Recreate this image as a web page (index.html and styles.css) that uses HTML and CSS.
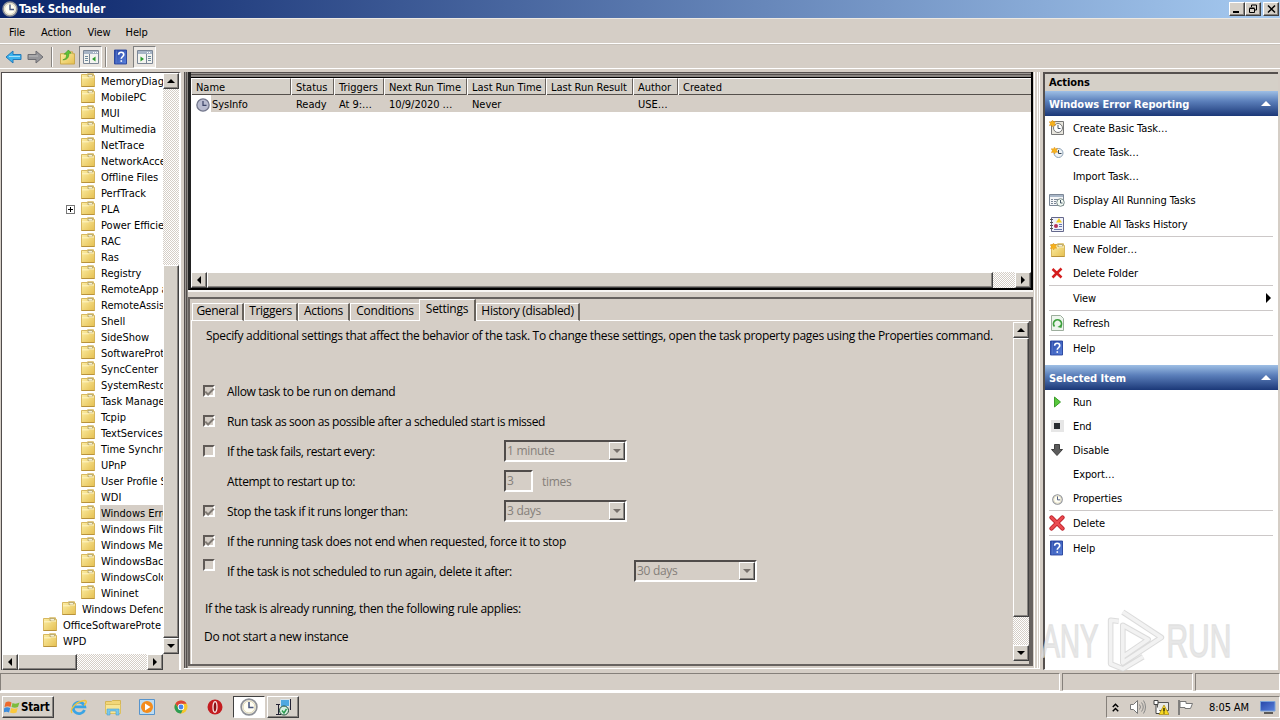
FILE: index.html
```html
<!DOCTYPE html>
<html lang="en">
<head>
<meta charset="utf-8">
<title>Task Scheduler</title>
<link rel="stylesheet" href="styles.css">
</head>
<body>
<svg width="0" height="0" class="defs">
  <defs>
    <linearGradient id="fg" x1="0" y1="0" x2="1" y2="1"><stop offset="0" stop-color="#fdf0a8"/><stop offset="1" stop-color="#e5bf50"/></linearGradient>
    <linearGradient id="blue" x1="0" y1="0" x2="1" y2="1"><stop offset="0" stop-color="#2747a8"/><stop offset="1" stop-color="#5b82dc"/></linearGradient>
    <symbol id="folder" viewBox="0 0 14 14"><path d="M.5 1.500H6.500V.8h6V2.500h1v11H.5z" fill="url(#fg)" stroke="#d3b052" stroke-width=".9"/><path d="M7 1.500h4.500v2.200H7z" fill="#f4f0d8" stroke="#a8965c" stroke-width=".7"/><path d="M1 4.800h6.500l1-.8H13" stroke="#fff6c8" fill="none"/><path d="M.5 13.500h13" stroke="#b8923c"/></symbol>
    <symbol id="clock" viewBox="0 0 16 16"><circle cx="8" cy="8" r="7" fill="#f2f0e8" stroke="#8d9096" stroke-width="1.500"/><circle cx="8" cy="8" r="5.300" fill="#fffef4" stroke="#d8cfa8" stroke-width=".7"/><path d="M8 3.500V8.500H12" fill="none" stroke="#4c5a80" stroke-width="1.400"/></symbol>
    <symbol id="help" viewBox="0 0 14 16"><path d="M.5.500h13v15H.5z" fill="url(#blue)" stroke="#24409a"/><path d="M2.500 1v14" stroke="#5674c6"/><path d="M5 5.500C5 2 10.500 2 10.500 5.500C10.500 7.500 7.800 7.500 7.800 10" fill="none" stroke="#fff" stroke-width="1.700"/><path d="M7 11.500h1.700v1.700H7z" fill="#fff"/></symbol>
    <symbol id="star" viewBox="0 0 8 8"><path d="M4 0l1 2 2.500-.5L6.300 4 8 6 5.500 6 4 8 3 6 .3 6.500 1.500 4 0 2 3 2z" fill="#f6b21c" stroke="#d8891a" stroke-width=".4"/></symbol>
    <symbol id="console" viewBox="0 0 16 14"><path d="M.5.500h15v13H.5z" fill="#f4f4f0" stroke="#7c8796"/><path d="M1 1h14v3H1z" fill="#a8b5c6"/><path d="M10 2.500h1M12 2.500h1M14 2.500h1" stroke="#fff"/><path d="M2 6.500h3M2 8.500h3M2 10.500h3" stroke="#6e8a9c"/><path d="M6.500 4v10" stroke="#7c8796"/></symbol>
  </defs>
</svg>

<div class="desktop">
  <header class="titlebar">
    <svg class="i16"><use href="#clock"/></svg>
    <h1>Task Scheduler</h1>
    <div class="winbtns">
      <span class="btn"><svg viewBox="0 0 14 12"><path d="M3 9h6" stroke="#000" stroke-width="2"/></svg></span>
      <span class="btn"><svg viewBox="0 0 14 12"><path d="M5.500 2h5M10.500 2v5H9M5.500 2v2M3.500 5.500h5v4h-5zM3.500 5h5" fill="none" stroke="#000"/></svg></span>
      <span class="btn close"><svg viewBox="0 0 14 12"><path d="M4 2.500l7 7M11 2.500l-7 7" stroke="#000" stroke-width="1.500"/></svg></span>
    </div>
  </header>
  <nav class="menubar"><span>File</span><span>Action</span><span>View</span><span>Help</span></nav>
  <div class="toolbar">
    <svg class="t-arrow" viewBox="0 0 17 14"><path d="M1 7l7-6v3.500h8v5H8V13z" fill="#3cb4ee" stroke="#2579b8"/><path d="M4 6.500h11" stroke="#a4e0fa"/></svg>
    <svg class="t-arrow fwd" viewBox="0 0 17 14"><path d="M16 7L9 1v3.500H1v5h8V13z" fill="#96969a" stroke="#6d6d72"/><path d="M2 6h9" stroke="#bbb"/></svg>
    <i class="tsep"></i>
    <svg class="t-up" viewBox="0 0 16 16"><path d="M.5 4.500h7l1-2h5v2h2v11H.5z" fill="url(#fg)" stroke="#c9a548"/><path d="M3 11c4-1 4-4 4-6H4.500L9 .5 12 4h-2.500c0 5-2 7-6.500 7z" fill="#5fc238" stroke="#36921c" stroke-width=".6"/></svg>
    <span class="tpress"><svg width="16" height="14"><use href="#console"/><path d="M12.500 6.500v5L9 9z" fill="#2d9c2d"/></svg></span>
    <i class="tsep second"></i>
    <svg class="t-help"><use href="#help"/></svg>
    <span class="tpress last"><svg width="16" height="14" viewBox="0 0 16 14"><path d="M.5.500h15v13H.5z" fill="#f4f4f0" stroke="#7c8796"/><path d="M1 1h14v3H1z" fill="#a8b5c6"/><path d="M10 2.500h1M12 2.500h1" stroke="#fff"/><path d="M11 6.500h3M11 8.500h3M11 10.500h3" stroke="#6e8a9c"/><path d="M9.500 4v10" stroke="#7c8796"/><path d="M3.500 6.500v5L7 9z" fill="#2d9c2d"/></svg></span>
  </div>

  <main class="main">
    <section class="tree">
      <div class="tree-body">
        <ul class="nodes" id="nodes"></ul>
        <div class="hs tree-hs"><span class="btn sb left"></span><span class="btn thumb"></span><i class="track"></i><span class="btn sb right"></span></div>
      </div>
      <div class="vs tree-vs"><span class="btn sb up"></span><i class="track"></i><span class="btn thumb"></span><span class="btn sb down"></span><i class="corner"></i></div>
    </section>

    <section class="center">
      <div class="list">
        <div class="row head"><span>Name</span><span>Status</span><span>Triggers</span><span>Next Run Time</span><span>Last Run Time</span><span>Last Run Result</span><span>Author</span><span>Created</span></div>
        <div class="row task"><span class="first"><svg class="dimclock" viewBox="0 0 16 16"><circle cx="8" cy="8" r="7" fill="#b9bcd0" stroke="#73778c" stroke-width="1.500"/><path d="M8 3.500V8.500H12" fill="none" stroke="#3c4468" stroke-width="1.400"/></svg><b>SysInfo</b></span><span>Ready</span><span>At 9:…</span><span>10/9/2020 …</span><span>Never</span><span></span><span>USE…</span><span></span></div>
        <div class="blank"></div>
        <div class="hs list-hs"><span class="btn sb left"></span><span class="btn thumb"></span><i class="track"></i><span class="btn sb right"></span></div>
      </div>
      <div class="split"></div>
      <div class="detail">
        <div class="tabs"><span>General</span><span>Triggers</span><span>Actions</span><span>Conditions</span><span class="on">Settings</span><span>History (disabled)</span></div>
        <div class="page">
          <div class="form">
            <p class="intro">Specify additional settings that affect the behavior of the task. To change these settings, open the task property pages using the Properties command.</p>
            <div class="opt"><i class="cb on"></i><label>Allow task to be run on demand</label></div>
            <div class="opt"><i class="cb on"></i><label class="tight">Run task as soon as possible after a scheduled start is missed</label></div>
            <div class="opt"><i class="cb"></i><label class="lab tight">If the task fails, restart every:</label><span class="combo">1 minute<span class="btn drop"></span></span></div>
            <div class="opt"><i class="cb none"></i><label class="lab">Attempt to restart up to:</label><span class="num">3</span><span class="dim">times</span></div>
            <div class="opt"><i class="cb on"></i><label class="lab">Stop the task if it runs longer than:</label><span class="combo">3 days<span class="btn drop"></span></span></div>
            <div class="opt"><i class="cb on"></i><label>If the running task does not end when requested, force it to stop</label></div>
            <div class="opt"><i class="cb high"></i><label class="lab wide">If the task is not scheduled to run again, delete it after:</label><span class="combo">30 days<span class="btn drop"></span></span></div>
            <p class="rule">If the task is already running, then the following rule applies:</p>
            <p class="rule2">Do not start a new instance</p>
          </div>
          <div class="vs page-vs"><span class="btn sb up"></span><span class="btn thumb"></span><i class="track"></i><span class="btn sb down"></span></div>
        </div>
      </div>
    </section>

    <aside class="actions">
      <h2>Actions</h2>
      <h3><span>Windows Error Reporting</span><i></i></h3>
      <ul>
        <li><svg viewBox="0 0 16 16"><path d="M2.500 1.500h12v13h-12z" fill="#e8e6de" stroke="#777"/><circle cx="9" cy="8" r="4.500" fill="#fff" stroke="#777"/><path d="M9 5v3.500h2.500" fill="none" stroke="#456"/><use href="#star" width="7" height="7"/></svg>Create Basic Task…</li>
        <li><svg viewBox="0 0 16 16"><circle cx="9.500" cy="9" r="4.500" fill="#eef2f6" stroke="#8aa0b4"/><path d="M9.500 6v3.500h3" fill="none" stroke="#345"/><use href="#star" x="2" y="3" width="7" height="7"/></svg>Create Task…</li>
        <li><svg></svg>Import Task…</li>
        <li><svg viewBox="0 0 16 16"><path d="M.5 2.500h14v11H.5z" fill="#f5f6f8" stroke="#7c8796"/><path d="M1 3h13v2H1z" fill="#a9b7c8"/><path d="M2 7.500h2M5 7.500h4M2 9.500h2M5 9.500h2M2 11.500h2M5 11.500h2" stroke="#7c8796"/><circle cx="11.500" cy="10.500" r="3.800" fill="#f4fbf4" stroke="#788"/><path d="M11.500 8v3h2" fill="none" stroke="#456"/></svg>Display All Running Tasks</li>
        <li><svg viewBox="0 0 16 16"><path d="M2.500 1.500h12v14h-12z" fill="#f0f1f8" stroke="#64688c"/><path d="M1 3.500h3M1 6.500h3M1 9.500h3M1 12.500h3" stroke="#555"/><path d="M10 2l3 4.500H7z" fill="#f2cd21"/><circle cx="7" cy="10" r="2" fill="#b4325a"/><path d="M10 8.500h3M10 10.500h3M5 13.500h8" stroke="#6878b0"/></svg>Enable All Tasks History</li>
        <li class="sep"><svg viewBox="0 0 16 16"><use href="#folder" x="2" y="2" width="14" height="14"/><use href="#star" x="1" y="2" width="7" height="7"/></svg>New Folder…</li>
        <li><svg viewBox="0 0 16 16"><path d="M3.500 4l9 8.500M12.500 3.500l-9 9" stroke="#d41e1e" stroke-width="2.500"/></svg>Delete Folder</li>
        <li class="sep"><svg></svg>View<i class="more"></i></li>
        <li class="sep"><svg viewBox="0 0 16 16"><path d="M2.500.500h9l3 3v12h-12z" fill="#edf5ed" stroke="#9cad9c"/><path d="M5.500 11.500a4 4 0 1 1 6 0" fill="none" stroke="#3ca03c" stroke-width="1.800"/><path d="M13 9l-.5 4-4-1z" fill="#3ca03c"/></svg>Refresh</li>
        <li class="sep"><svg viewBox="0 0 16 16"><use href="#help" x="1" width="13" height="16"/></svg>Help</li>
      </ul>
      <h3 class="h3b"><span>Selected Item</span><i></i></h3>
      <ul>
        <li><svg viewBox="0 0 16 16"><path d="M5.500 3l6 5-6 5z" fill="#58c83c" stroke="#3c9c2c"/></svg>Run</li>
        <li><svg viewBox="0 0 16 16"><path d="M2 2h13v12H2z" fill="#e6e6e6"/><path d="M5 5h6v6H5z" fill="#282c30"/></svg>End</li>
        <li><svg viewBox="0 0 16 16"><path d="M5.500 2.500h5v5h3L8 13.500 2.500 7.500h3z" fill="#5c5c5c" stroke="#404040"/></svg>Disable</li>
        <li><svg></svg>Export…</li>
        <li><svg viewBox="0 0 16 16"><use href="#clock" x="3" y="4" width="11" height="11"/></svg>Properties</li>
        <li class="sep"><svg viewBox="0 0 16 16"><path d="M2.500 2.500l11 11M13.500 2.500l-11 11" stroke="#b81822" stroke-width="4.200" stroke-linecap="round"/><path d="M2.500 2.500l11 11M13.500 2.500l-11 11" stroke="#ea4b50" stroke-width="2.600" stroke-linecap="round"/></svg>Delete</li>
        <li class="sep"><svg viewBox="0 0 16 16"><use href="#help" x="1" width="13" height="16"/></svg>Help</li>
      </ul>
    </aside>
  </main>

  <div class="status"><span></span><span></span><span></span></div>

  <footer class="taskbar">
    <span class="btn start"><svg viewBox="0 0 16 15"><path d="M1.500 2.500Q4.500.5 7.500 2.500L6.500 7Q4 5.500.5 7z" fill="#ee6a2c"/><path d="M8.500 3Q12 4.500 15.500 2.500L14 7Q11 8.500 7.500 7z" fill="#7cbc3c"/><path d="M.3 8Q3 6.500 6.200 8L5 12.500Q2.500 11-.5 12.500z" fill="#3c8cdc"/><path d="M7.200 8Q10.500 9.500 13.700 8L12.500 12.500Q9.500 14 6 12.500z" fill="#fac83c"/></svg>Start</span>
    <svg class="q" viewBox="0 0 18 18"><path d="M14.500 12A5.800 5.800 0 1 1 14.800 8.800H4" fill="none" stroke="#3aa4e4" stroke-width="2.800"/><path d="M2 15C-1 11 7 3 15 2.500c3 .5 0 4-1 5" fill="none" stroke="#f0c43c" stroke-width="1.400"/></svg>
    <svg class="q" viewBox="0 0 18 18"><path d="M1.500 3.500h6l1-1h8v5h-15z" fill="#f2d677" stroke="#d4b554"/><path d="M1.500 6.500h15v9h-15z" fill="#f8e594" stroke="#dcc060"/><path d="M3 17v-6h12v6h-3v-4H6v4z" fill="#78c8ec" stroke="#4ca0d0" stroke-width=".6"/></svg>
    <svg class="q" viewBox="0 0 18 18"><path d="M1.500 1.500h15v15h-15z" fill="#bddcf2" stroke="#5794cc"/><circle cx="9" cy="9" r="6" fill="#f48c1c"/><path d="M7 5.500L12.500 9 7 12.500z" fill="#fff"/></svg>
    <svg class="q" viewBox="0 0 18 18"><circle cx="9" cy="9" r="6.500" fill="#f6c62c"/><path d="M3.400 5.700A6.500 6.500 0 0 1 14.600 5.700H9L6 9z" fill="#dc4438"/><path d="M3.400 5.700A6.500 6.500 0 0 0 9 15.500L11 11H7z" fill="#2c9c54"/><circle cx="9" cy="9" r="3.200" fill="#fff"/><circle cx="9" cy="9" r="2.400" fill="#4884ec"/></svg>
    <svg class="q" viewBox="0 0 18 18"><circle cx="9" cy="9" r="7.500" fill="#c41c20"/><ellipse cx="9" cy="9" rx="2" ry="5.300" fill="#8c1014" stroke="#f8e4e4" stroke-width="1.300"/></svg>
    <span class="app"><svg class="i18" viewBox="0 0 16 16"><use href="#clock"/></svg></span>
    <span class="btn app2"><svg viewBox="0 0 18 18" class="i18"><path d="M6.500 1.500h9v7h-9z" fill="#50a8e0" stroke="#d8e4ec"/><path d="M16.500 1v11M2 6.500h4M4.500 6v10M2 16.500h5" stroke="#223" fill="none"/><circle cx="10" cy="12.500" r="4.500" fill="#d8f0e0" stroke="#1c4c38"/><path d="M8 12.500l2 2.500 2.500-4" stroke="#2c9c50" fill="none" stroke-width="1.500"/></svg></span>
    <div class="tray">
      <svg class="chev" viewBox="0 0 8 10"><path d="M1.500 4.500L4 2l2.500 2.500M1.500 8.500L4 6l2.500 2.500" fill="none" stroke="#000" stroke-width="1.300"/></svg>
      <svg class="spk" viewBox="0 0 17 16"><path d="M1.500 5.500h3l4-4v13l-4-4h-3z" fill="#fff" stroke="#777"/><path d="M10.500 5.500q2 2.500 0 5M12.500 3.500q3.500 4.500 0 9M14.500 1.500q4 6.500 0 13" fill="none" stroke="#888"/></svg>
      <svg class="net" viewBox="0 0 16 16"><path d="M4.500 3.500h11v8h-11z" fill="#e8e8e4" stroke="#555"/><path d="M1 1.500h4v4H1zM3 6v8.500h5" fill="#fff" stroke="#444"/><path d="M11 6l5 9.500H6z" fill="#f8d820" stroke="#a88810" stroke-width=".7"/><path d="M11 9v3.500M11 13.500v1" stroke="#000" stroke-width="1.200"/></svg>
      <svg class="flag" viewBox="0 0 17 16"><path d="M2 1v15" stroke="#666" stroke-width="1.500"/><path d="M3 2.500h6v2h6.500l-2 5H8v-1H3z" fill="#fff" stroke="#777"/></svg>
      <span>8:05 AM</span>
      <svg class="mon" viewBox="0 0 16 14"><path d="M.5 1.500h14.500v9.500H.5z" fill="url(#blue)" stroke="#7ca4d8"/><path d="M4 13h9" stroke="#333" stroke-width="1.500"/></svg>
    </div>
  </footer>

  <svg class="mark" viewBox="0 0 196 66">
    <g fill="#e2e2e2" stroke="#dcdcdc" stroke-width="1.400">
      <text x="5" y="49" textLength="56" lengthAdjust="spacingAndGlyphs">ANY</text>
      <text x="128" y="49" textLength="64" lengthAdjust="spacingAndGlyphs">RUN</text>
    </g>
    <g fill="none" stroke-linejoin="round"><path d="M85 5l38 25-38 25V18l25 14-25 17M81 14l-8-1v43l12 5 20-12" stroke="#d4d4d4" stroke-width="5.500"/><path d="M85 5l38 25-38 25V18l25 14-25 17M81 14l-8-1v43l12 5 20-12" stroke="#f0f0f0" stroke-width="3.500"/></g>
  </svg>
</div>
<script src="tree.js"></script>
</body>
</html>
```
FILE: styles.css
```css
*, *::before, *::after { box-sizing: border-box; }
body { margin: 0; overflow: hidden; background: #d5cec6; font: 11px "DejaVu Sans Condensed", "DejaVu Sans", sans-serif; font-stretch: condensed; color: #000; }
h1, h2, h3, p, ul { margin: 0; padding: 0; font-size: inherit; }
ul { list-style: none; }
svg { display: block; flex: none; }
.defs { position: absolute; }
.i16 { width: 16px; height: 16px; }
.i18 { width: 18px; height: 18px; }
.desktop { position: relative; width: 1280px; height: 720px; display: flex; flex-direction: column; overflow: hidden; letter-spacing: -.1px; }
.btn { display: block; flex: none; background: #d5d0c8; border: 1px solid; border-color: #fff #404040 #404040 #fff; box-shadow: inset -1px -1px #888480; }

.titlebar { height: 18px; flex: none; display: flex; align-items: center; padding-left: 2px; background: linear-gradient(90deg, #0a246a, #a6caf0); }
.titlebar h1 { color: #fff; margin-left: 1px; font-size: 11.500px; letter-spacing: -.1px; }
.winbtns { margin-left: auto; display: flex; padding-right: 1px; }
.winbtns .btn { width: 16px; height: 14px; }
.winbtns .close { margin-left: 2px; }
.winbtns svg { width: 14px; height: 12px; }
.menubar { height: 26px; flex: none; display: flex; align-items: center; padding: 2px 0 0 9px; border-top: 1px solid #ece8e2; border-bottom: 1px solid #fff; }
.menubar span:nth-child(2) { margin-left: 16px; }
.menubar span:nth-child(3) { margin-left: 16px; }
.menubar span:nth-child(4) { margin-left: 15px; }
.toolbar { height: 25px; flex: none; display: flex; align-items: center; padding-left: 5px; border-top: 1px solid #c8c2ba; border-bottom: 1px solid #fff; }
.t-arrow { width: 17px; height: 14px; }
.fwd { margin-left: 5px; }
.tsep { width: 2px; height: 20px; border-left: 1px solid #888480; border-right: 1px solid #fff; margin: 0 7px; }
.t-up { width: 15px; height: 16px; }
.tpress { width: 23px; height: 22px; margin-left: 4px; display: flex; align-items: center; justify-content: center; background: #ebe7e2; border: 1px solid; border-color: #808080 #fff #fff #808080; }
.second { margin: 0 7px 0 3px; }
.t-help { width: 13px; height: 16px; }
.last { margin-left: 6px; }

.main { height: 603px; flex: none; display: flex; padding: 3px 2px 0 1px; }
.tree { width: 180px; height: 598px; display: flex; border: 1px solid #504c4c; border-right: 2px solid #fff; border-bottom: 0; background: #fff; letter-spacing: 0; }
.tree-body { width: 161px; display: flex; flex-direction: column; }
.nodes { height: 581px; overflow: hidden; }
.nodes li { height: 16px; width: 161px; display: flex; align-items: center; padding-left: 79px; overflow: hidden; white-space: nowrap; }
.nodes li svg { width: 14px; height: 14px; margin-top: -2px; }
.nodes li span { margin-left: 5px; padding-left: 1px; height: 16px; line-height: 17px; flex: 1 0 auto; }
.nodes li.sel span { background: #d5cec6; }
.nodes li.l1 { padding-left: 60px; }
.nodes li.l0 { padding-left: 41px; }
.nodes li.plus { padding-left: 64px; }
.nodes li.plus::before { content: ""; flex: none; width: 9px; height: 9px; margin-right: 6px; border: 1px solid #777; background: linear-gradient(#000, #000) center / 5px 1px no-repeat, linear-gradient(#000, #000) center / 1px 5px no-repeat; }
.track { flex: 1; background: repeating-conic-gradient(#fff 0 25%, #d5cec6 0 50%) 0 0 / 2px 2px; }
.hs { display: flex; height: 16px; flex: none; }
.vs { display: flex; flex-direction: column; width: 16px; flex: none; }
.sb { width: 16px; height: 16px; display: flex; align-items: center; justify-content: center; }
.sb::after, .drop::after { content: ""; border: 4px solid transparent; }
.up::after { border-width: 0 4px 4px; border-bottom-color: #000; }
.down::after, .drop::after { border-width: 4px 4px 0; border-top-color: #000; }
.left::after { border-width: 4px 4px 4px 0; border-right-color: #000; }
.right::after { border-width: 4px 0 4px 4px; border-left-color: #000; }
.tree-hs .thumb { width: 59px; }
.tree-vs .thumb { height: 373px; }
.corner { height: 16px; background: #d5cec6; }

.center { width: 856px; margin-left: 3px; height: 597px; display: flex; flex-direction: column; padding: 0 7px 2px 4px; background: linear-gradient(90deg, #55504e 1px, #9a9692 1px 2px, #55504e 2px 3px, #8a8682 3px 4px, transparent 4px 850px, #fff 850px 851px, #d5cec6 851px 853px, #fff 853px 854px, #d5cec6 854px 855px, #fff 855px); border-bottom: 1px solid #fff; }
.list { height: 218px; flex: none; display: flex; flex-direction: column; border: solid #000; border-width: 0 2px 2px 3px; border-left-color: #222; background: #fff; overflow: hidden; }
.list::before { content: ""; height: 6px; flex: none; margin-left: -3px; margin-right: -2px; background: linear-gradient(#55504e 1px, #9a9692 1px 2px, #55504e 2px 3px, #8a8682 3px 5px, #000 5px); }
.row { display: grid; grid-template-columns: 100px 43px 50px 83px 79px 87px 45px 1fr; flex: none; white-space: nowrap; letter-spacing: -.03px; }
.head { height: 17px; background: #d5d0c8; border-bottom: 1px solid #55504c; }
.head span { padding-left: 4px; line-height: 17px; border-top: 1px solid #fff; border-left: 1px solid #fff; border-right: 1px solid #67615c; }
.head span:last-child { border-right: 0; }
.task { height: 17px; line-height: 19px; background: linear-gradient(90deg, #fff 20px, #d5cec6 20px); }
.task span { padding-left: 5px; }
.task .first { display: flex; align-items: center; }
.task b { font-weight: normal; margin-left: 2px; }
.dimclock { width: 14px; height: 14px; }
.blank { flex: 1; }
.list-hs .thumb { width: 786px; }
.split { height: 7px; flex: none; background: #d5cec6; border-top: 2px solid #f8f6f4; }
.detail { flex: 1; display: flex; flex-direction: column; border: 2px solid #67625f; padding: 0 0 0 1px; min-height: 0; }
.tabs { height: 22px; flex: none; display: flex; align-items: flex-end; padding-left: 1px; font: 12px "Open Sans", "Noto Sans", sans-serif; letter-spacing: -.28px; box-shadow: inset 0 -1px #fff; }
.tabs span { height: 18px; line-height: 14px; text-align: center; border: solid #fff; border-width: 1px; border-right: 2px solid #67625c; white-space: nowrap; }
.tabs span:nth-child(1) { width: 52px; }
.tabs span:nth-child(2) { width: 54px; }
.tabs span:nth-child(3) { width: 52px; }
.tabs span:nth-child(4) { width: 69px; border-right-width: 0; }
.tabs span:nth-child(5) { width: 57px; }
.tabs span:nth-child(6) { width: 104px; }
.tabs .on { height: 22px; line-height: 18px; background: #d5cec6; border-bottom: 0; }
.page { flex: 1; display: flex; border-left: 1px solid #fff; border-right: 2px solid #67625f; min-height: 0; padding: 1px 0 3px; }
.form { width: 821px; flex: none; padding-left: 11px; font: 12px "Open Sans", "Noto Sans", sans-serif; letter-spacing: -.33px; white-space: nowrap; }
.tight { letter-spacing: -.4px; }
.intro { line-height: 16px; height: 54px; padding: 6px 0 0 3px; letter-spacing: -.32px; }
.opt { height: 30px; display: flex; align-items: center; }
.cb { width: 12px; height: 12px; border: 2px solid; border-color: #605a56 #fff #fff #605a56; margin: -1px 12px 0 0; display: flex; flex: none; }
.cb.on::after { content: ""; flex: none; width: 9px; height: 5px; border: solid #807a74; border-width: 0 0 2px 2px; transform: rotate(-45deg) translate(-1px, 1px); }
.cb.none { visibility: hidden; }
.cb.high { align-self: flex-start; margin-top: 3px; }
.lab { width: 277px; }
.lab.wide { width: 407px; }
.combo, .num { height: 22px; line-height: 17px; color: #85807a; border: 2px solid; border-color: #504c4a #fff #fff #504c4a; padding-left: 1px; letter-spacing: -.3px; }
.combo { width: 123px; display: flex; justify-content: space-between; box-shadow: inset -1px 0 #504c4a; }
.drop { width: 16px; height: 18px; display: flex; align-items: center; justify-content: center; }
.drop::after { border-top-color: #77716c; }
.num { width: 29px; }
.dim { margin-left: 9px; color: #85807a; letter-spacing: -.3px; }
.rule { margin-top: 15px; line-height: 16px; padding-left: 2px; }
.rule2 { margin-top: 12px; line-height: 16px; padding-left: 1px; }
.page-vs .thumb { height: 279px; }

.actions { width: 235px; height: 598px; margin-left: 3px; background: #fff; border-left: 2px solid #55504e; border-top: 2px solid #55504e; border-bottom: 1px solid #fff; }
.actions h2 { height: 17px; line-height: 17px; padding-left: 4px; background: #d5d0c8; font-size: 11px; }
.actions h3 { height: 25px; padding: 0 7px 0 4px; display: flex; align-items: center; justify-content: space-between; color: #fff; background: linear-gradient(#9ebfe5, #5c80bb 40%, #1b3878); }
.actions h3 span { padding-top: 1px; letter-spacing: -.02px; }
.actions h3 i { border: 5px solid transparent; border-width: 0 5px 5px; border-bottom-color: #fff; }
.h3b { margin-top: 5px; }
.actions li { height: 24px; display: flex; align-items: center; padding-left: 4px; white-space: nowrap; }
.actions li svg { width: 16px; height: 16px; margin-right: 8px; }
.actions li.sep { height: 25px; margin: 0 5px 0 4px; padding-left: 0; border-top: 1px solid #ccc8c8; }
.more { margin-left: auto; margin-right: 2px; border: 5px solid transparent; border-width: 5px 0 5px 5px; border-left-color: #000; }

.status { height: 20px; flex: none; display: grid; grid-template-columns: 1060px 131px 85px; gap: 2px; border-bottom: 1px solid #fff; padding-top: 1px; }
.status span { border: 1px solid; border-color: #85807a #fff #fff #85807a; }
.taskbar { flex: 1; display: flex; align-items: center; border-top: 1px solid #fff; padding: 2px 0 1px 2px; }
.start { width: 52px; height: 22px; display: flex; align-items: center; font-weight: bold; font-size: 11.500px; letter-spacing: -.2px; }
.start svg { width: 16px; height: 15px; margin: 0 1px; }
.q { width: 18px; height: 18px; margin-left: 16px; }
.app { width: 32px; height: 22px; margin-left: 9px; display: flex; align-items: center; justify-content: center; background: #fff; border: 1px solid; border-color: #404040 #fff #fff #404040; }
.app2 { width: 32px; height: 22px; margin-left: 2px; display: flex; align-items: center; justify-content: center; }
.tray { margin-left: auto; width: 174px; height: 22px; display: flex; align-items: center; border: 1px solid; border-color: #85807a #fff #fff #85807a; padding-left: 4px; white-space: nowrap; }
.chev { width: 9px; height: 11px; }
.spk { width: 17px; height: 16px; margin-left: 9px; }
.net { width: 16px; height: 16px; margin-left: 7px; }
.flag { width: 17px; height: 16px; margin-left: 8px; }
.tray span { margin-left: 15px; }
.mon { width: 16px; height: 14px; margin-left: 11px; }
.mark { position: absolute; left: 1036px; top: 607px; width: 200px; height: 67px; opacity: .8; }
.mark text { font: 46px "Liberation Sans", sans-serif; letter-spacing: 0; }
```
FILE: tree.js
```js
const names = ["MemoryDiagn", "MobilePC", "MUI", "Multimedia", "NetTrace", "NetworkAcce", "Offline Files", "PerfTrack", "PLA", "Power Efficie", "RAC", "Ras", "Registry", "RemoteApp a", "RemoteAssis", "Shell", "SideShow", "SoftwareProt", "SyncCenter", "SystemResto", "Task Manage", "Tcpip", "TextServices", "Time Synchro", "UPnP", "User Profile S", "WDI", "Windows Erro", "Windows Filte", "Windows Med", "WindowsBack", "WindowsColo", "Wininet", "Windows Defend", "OfficeSoftwareProte", "WPD"];
const classes = { "PLA": "plus", "Windows Erro": "sel", "Windows Defend": "l1", "OfficeSoftwareProte": "l0", "WPD": "l0" };
document.getElementById("nodes").innerHTML = names.map(n =>
  `<li class="${classes[n] || ""}"><svg><use href="#folder"/></svg><span>${n}</span></li>`).join("");
```
